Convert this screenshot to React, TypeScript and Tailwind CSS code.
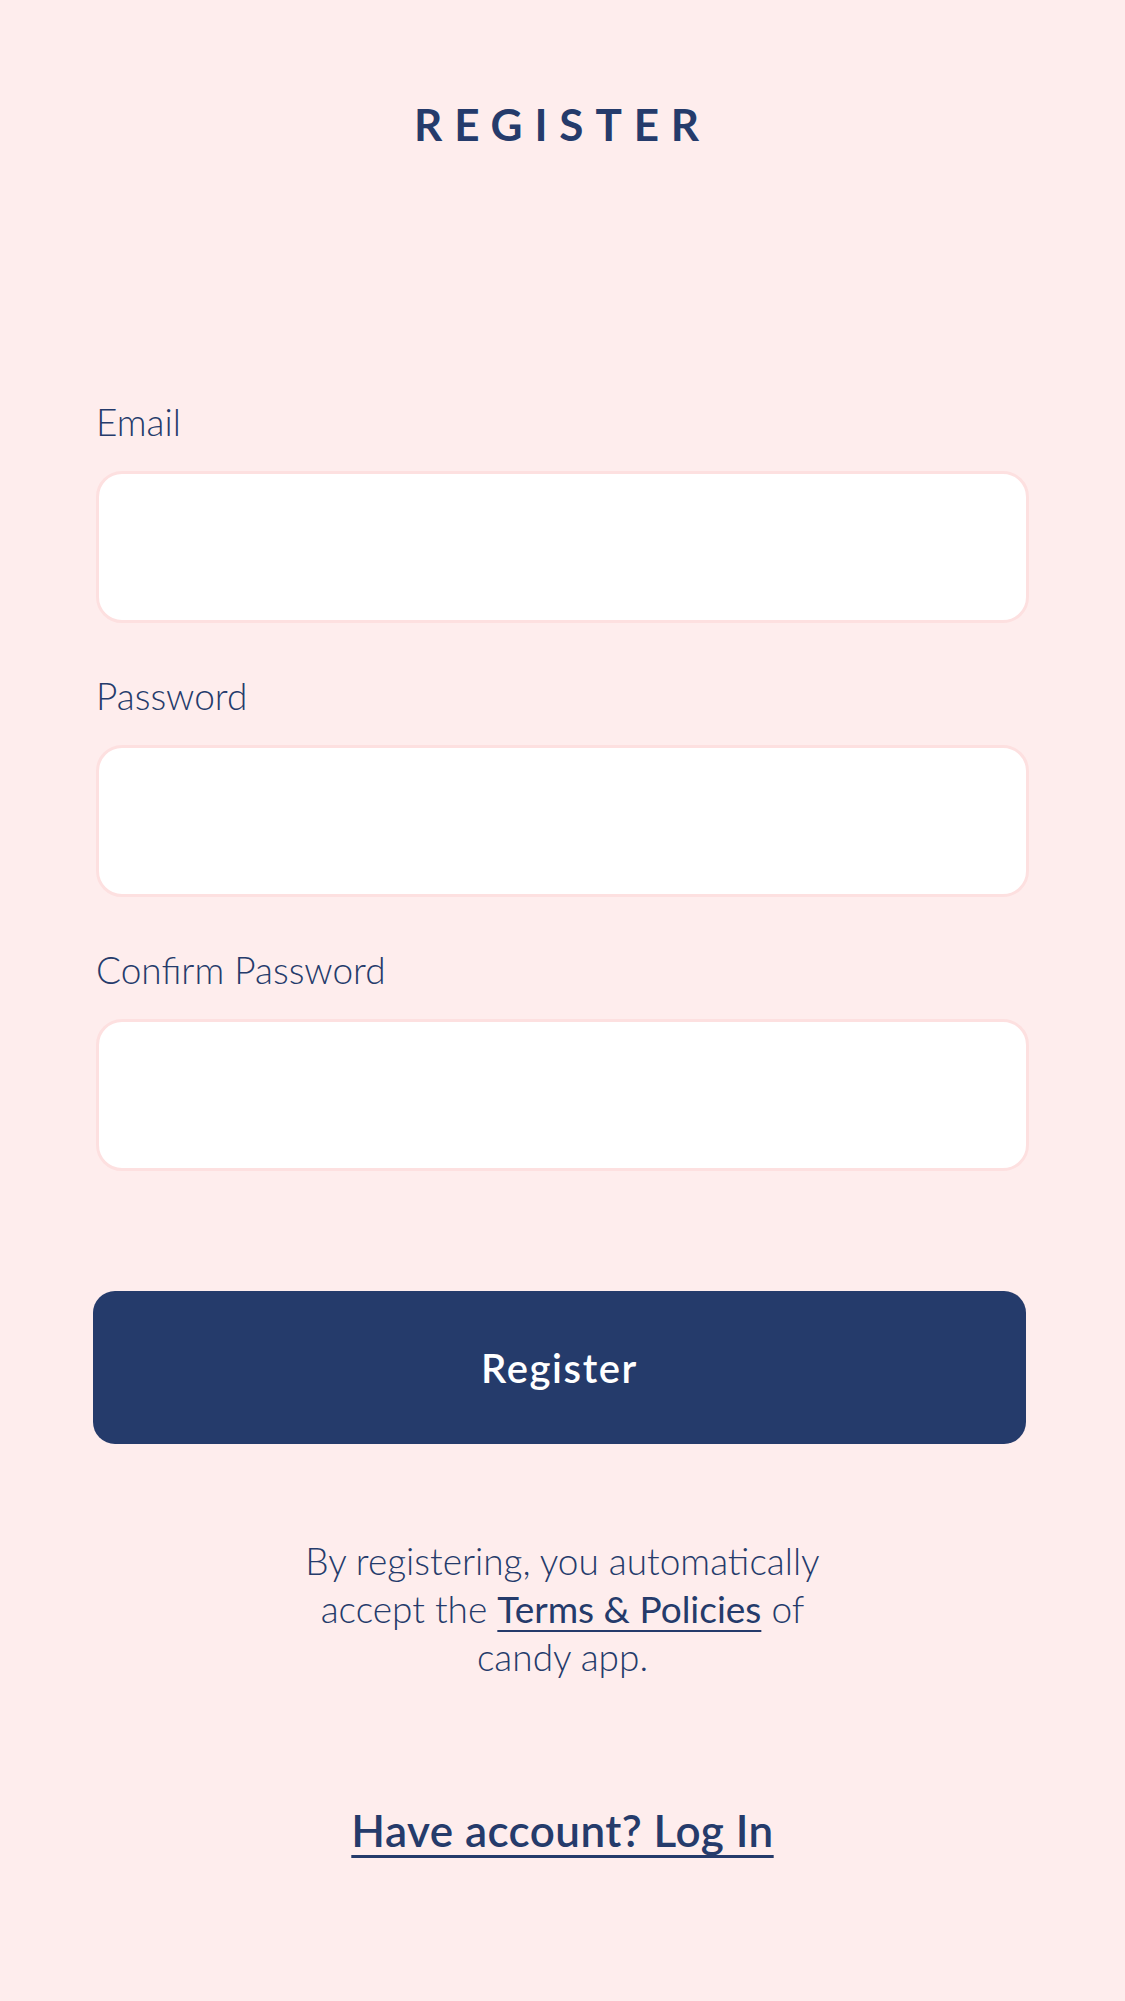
import React, { useState } from "react";

const Field = ({
  label,
  type,
  value,
  onChange,
}: {
  label: string;
  type: string;
  value: string;
  onChange: (v: string) => void;
}) => (
  <div className="flex flex-col gap-[31px]">
    <label className="text-[37px] font-light leading-none text-[#253b6b]">
      {label}
    </label>
    <input
      type={type}
      value={value}
      onChange={(e) => onChange(e.target.value)}
      className="h-[152px] w-full rounded-[26px] border-[3px] border-[#fde0e0] bg-white px-6 text-[34px] text-[#253b6b] outline-none"
    />
  </div>
);

const App: React.FC = () => {
  const [email, setEmail] = useState("");
  const [password, setPassword] = useState("");
  const [confirm, setConfirm] = useState("");

  return (
    <div
      className="min-h-[2001px] w-full bg-[#feeded] px-[96px] pt-[102px]"
      style={{ fontFamily: "Lato, 'Open Sans', sans-serif" }}
    >
      <h1 className="text-center text-[44px] font-bold leading-none tracking-[0.27em] text-[#253b6b]">
        REGISTER
      </h1>

      <form
        className="mt-[257px] flex flex-col"
        onSubmit={(e) => e.preventDefault()}
      >
        <div className="flex flex-col gap-[54px]">
          <Field label="Email" type="email" value={email} onChange={setEmail} />
          <Field
            label="Password"
            type="password"
            value={password}
            onChange={setPassword}
          />
          <Field
            label="Confirm Password"
            type="password"
            value={confirm}
            onChange={setConfirm}
          />
        </div>

        <button
          type="submit"
          className="ml-[-3px] mt-[120px] h-[153px] w-full rounded-[22px] bg-[#253b6b] text-[40px] font-semibold tracking-[0.04em] text-white"
        >
          Register
        </button>
      </form>

      <p className="mt-[93px] text-center text-[37px] font-light leading-[48px] text-[#253b6b]">
        By registering, you automatically
        <br />
        accept the{" "}
        <a
          href="#"
          className="font-normal underline decoration-[2px] underline-offset-[7px]"
        >
          Terms &amp; Policies
        </a>{" "}
        of
        <br />
        candy app.
      </p>

      <div className="mt-[127px] text-center">
        <a
          href="#"
          className="text-[44px] font-semibold leading-none tracking-[0.01em] text-[#253b6b] underline decoration-[3px] underline-offset-[8px]"
        >
          Have account? Log In
        </a>
      </div>
    </div>
  );
};

export default App;
